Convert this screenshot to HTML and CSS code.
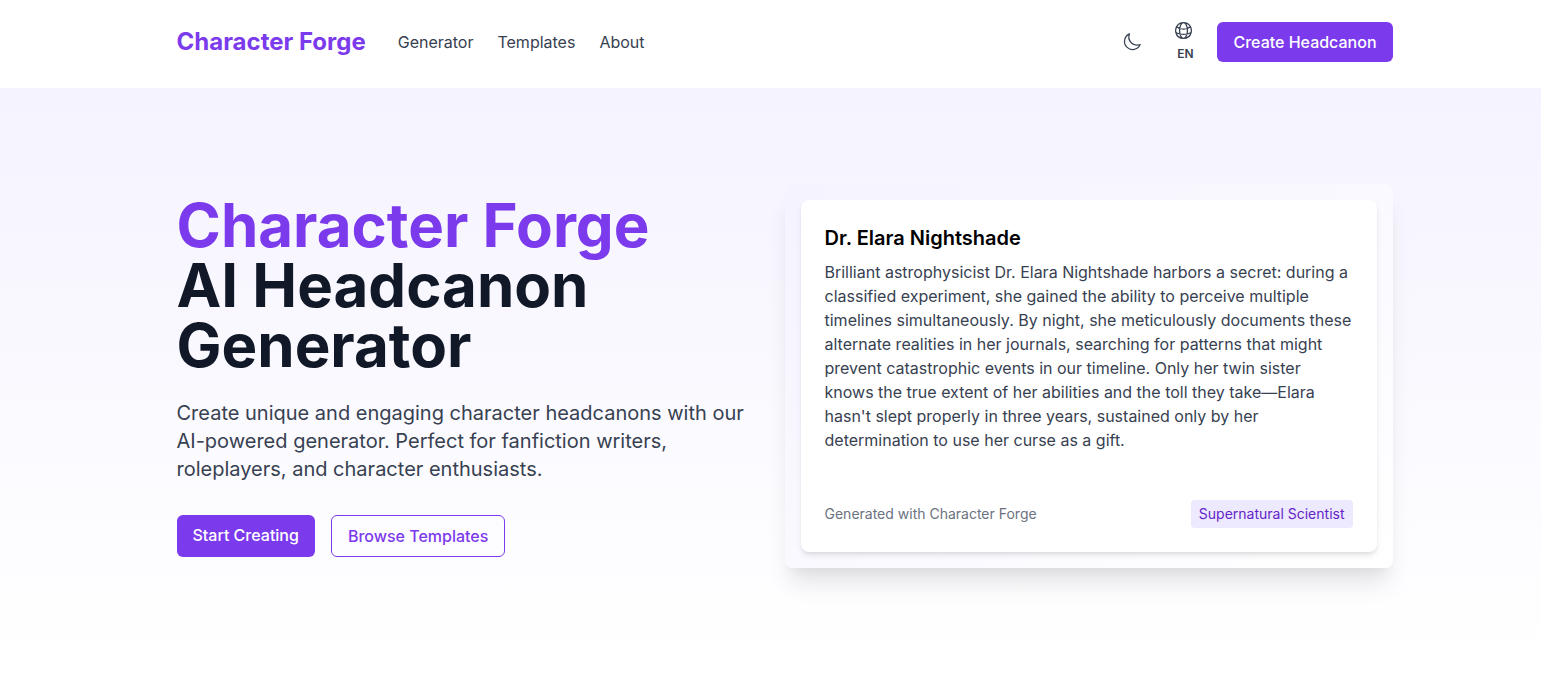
FILE: index.html
```html
<!doctype html><html lang="en"><head>
<meta charset="UTF-8" />
<meta name="viewport" content="width=device-width" />
<title>Character Forge - AI Headcanon Generator</title>
<link rel="stylesheet" href="styles.css"></head><body>
<header class="head">
	<div class="wrap flex ac between">
		<div class="flex ac">
			<a href="#" class="logo">Character Forge</a>
			<nav class="nav flex">
				<a href="#">Generator</a>
				<a href="#">Templates</a>
				<a href="#">About</a>
			</nav>
		</div>
		<div class="flex ac">
			<a href="#" class="icon-btn" aria-label="Theme">
				<svg width="20" height="20" viewBox="0 0 24 24" fill="none" stroke="currentColor" stroke-width="1.5" stroke-linecap="round" stroke-linejoin="round"><path d="M21.75 15A9.75 9.75 0 0 1 9 2.25 9.75 9.75 0 1 0 21.75 15Z"/></svg>
			</a>
			<a href="#" class="lang">
				<svg width="21" height="21" viewBox="0 0 24 24" fill="none" stroke="currentColor" stroke-width="1.5" stroke-linecap="round" stroke-linejoin="round"><path d="M12 21a9.004 9.004 0 0 0 8.716-6.747M12 21a9.004 9.004 0 0 1-8.716-6.747M12 21c2.485 0 4.5-4.03 4.5-9S14.485 3 12 3m0 18c-2.485 0-4.5-4.03-4.5-9S9.515 3 12 3m0 0a8.997 8.997 0 0 1 7.843 4.582M12 3a8.997 8.997 0 0 0-7.843 4.582m15.686 0A11.953 11.953 0 0 1 12 10.5c-2.998 0-5.74-1.1-7.843-2.918m15.686 0A8.959 8.959 0 0 1 21 12c0 .778-.099 1.533-.284 2.253m0 0A17.919 17.919 0 0 1 12 16.5c-3.162 0-6.133-.815-8.716-2.247m0 0A9.004 9.004 0 0 1 3 12c0-1.605.42-3.113 1.157-4.418"/></svg>
				<span>EN</span>
			</a>
			<a href="#" class="btn btn-main">Create Headcanon</a>
		</div>
	</div>
</header>
<section class="hero">
	<div class="wrap flex ac">
		<div class="intro">
			<h1><span class="accent">Character Forge</span><br />AI Headcanon Generator</h1>
			<p class="lead">Create unique and engaging character headcanons with our AI-powered generator. Perfect for fanfiction writers, roleplayers, and character enthusiasts.</p>
			<div class="actions flex">
				<a href="#" class="btn btn-main btn-start">Start Creating</a>
				<a href="#" class="btn btn-line">Browse Templates</a>
			</div>
		</div>
		<div class="sample">
			<div class="card">
				<h3>Dr. Elara Nightshade</h3>
				<p>Brilliant astrophysicist Dr. Elara Nightshade harbors a secret: during a classified experiment, she gained the ability to perceive multiple timelines simultaneously. By night, she meticulously documents these alternate realities in her journals, searching for patterns that might prevent catastrophic events in our timeline. Only her twin sister knows the true extent of her abilities and the toll they take—Elara hasn't slept properly in three years, sustained only by her determination to use her curse as a gift.</p>
				<div class="card-foot flex ac between">
					<span class="credit">Generated with Character Forge</span>
					<span class="tag">Supernatural Scientist</span>
				</div>
			</div>
		</div>
	</div>
</section>
</body></html>
```

FILE: styles.css
```css
body{ margin: 0; background: #fff; color: #111827; font: 16px/24px Inter, "Liberation Sans", sans-serif; overflow-x: hidden }
a{ color: inherit; text-decoration: none }
.flex{ display: flex }
.ac{ align-items: center }
.between{ justify-content: space-between }
.wrap{ width: 1216px; margin-left: 176.5px }

.head{ background: #fff }
.head .wrap{ height: 84px; padding-bottom: 4px }
.logo{ color: #7c3aed; font-size: 24px; line-height: 32px; font-weight: 700 }
.nav{ margin-left: 32px; gap: 24px; color: #374151 }
.icon-btn{ display: flex; padding: 8px; color: #374151; margin-right: 23px }
.lang{ display: flex; flex-direction: column; align-items: center; color: #374151; margin-right: 19.5px; margin-top: -3px }
.lang svg{ margin-right: 4px }
.lang span{ font-size: 12px; line-height: 16px; font-weight: 600; margin-top: 5px }

.btn{ display: block; box-sizing: border-box; border-radius: 6px; font-weight: 500 }
.btn-main{ background: #7c3aed; color: #fff; padding: 8px 16px }
.btn-start{ height: 42px }
.btn-line{ border: 1px solid #7c3aed; color: #7c3aed; padding: 8px 16px; height: 42px }

.hero{ padding: 96px 0; background: linear-gradient(#f5f3ff, #fff) }
.intro{ width: 576px; margin-right: 32px; flex: none }
h1{ margin: 0; font-size: 60px; line-height: 60px; font-weight: 700 }
.accent{ color: #7c3aed }
.lead{ margin: 24px 0 0; font-size: 20px; line-height: 28px; color: #374151 }
.actions{ margin-top: 32px; gap: 16px }

.sample{ width: 608px; box-sizing: border-box; padding: 16px; border-radius: 8px; background: linear-gradient(to bottom right, #f5f3ff, #fff); box-shadow: 0 20px 25px -5px rgba(0,0,0,.1), 0 10px 10px -5px rgba(0,0,0,.04) }
.card{ background: #fff; border-radius: 8px; padding: 24px; box-shadow: 0 4px 6px -1px rgba(0,0,0,.1), 0 2px 4px -1px rgba(0,0,0,.06) }
.card h3{ margin: 0 0 8px; font-size: 20px; line-height: 28px; font-weight: 600; color: #000 }
.card p{ margin: 0; color: #374151 }
.card-foot{ margin-top: 48px }
.credit{ font-size: 14px; line-height: 20px; color: #6b7280 }
.tag{ background: #ede9fe; color: #6425c8; font-size: 14px; line-height: 20px; padding: 4px 8px; border-radius: 4px }
```
